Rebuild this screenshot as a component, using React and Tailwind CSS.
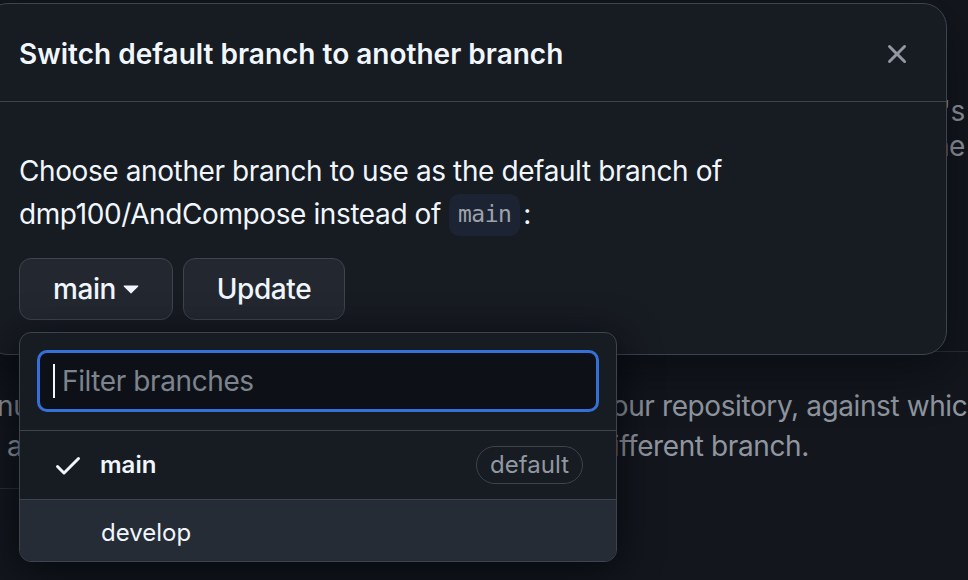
import React from "react";

const font = { fontFamily: "Inter, 'Noto Sans', sans-serif" };

function XIcon() {
  return (
    <svg width="32" height="32" viewBox="0 0 16 16" fill="#9198a1">
      <path d="M3.72 3.72a.75.75 0 0 1 1.06 0L8 6.94l3.22-3.22a.749.749 0 0 1 1.275.326.749.749 0 0 1-.215.734L9.06 8l3.22 3.22a.749.749 0 0 1-.326 1.275.749.749 0 0 1-.734-.215L8 9.06l-3.22 3.22a.751.751 0 0 1-1.042-.018.751.751 0 0 1-.018-1.042L6.94 8 3.72 4.78a.75.75 0 0 1 0-1.06Z" />
    </svg>
  );
}

function CheckIcon() {
  return (
    <svg width="32" height="32" viewBox="0 0 16 16" fill="#f0f6fc">
      <path d="M13.78 4.22a.75.75 0 0 1 0 1.06l-7.25 7.25a.75.75 0 0 1-1.06 0L2.22 9.28a.751.751 0 0 1 .018-1.042.751.751 0 0 1 1.042-.018L6 10.94l6.72-6.72a.75.75 0 0 1 1.06 0Z" />
    </svg>
  );
}

function Caret() {
  return (
    <svg width="16" height="9" viewBox="0 0 16 9" fill="#f0f6fc">
      <path d="M1.2 0.5h13.6a.6.6 0 0 1 .42 1.02L8.42 8.3a.6.6 0 0 1-.84 0L.78 1.52A.6.6 0 0 1 1.2.5Z" />
    </svg>
  );
}

export default function App() {
  return (
    <div
      className="relative w-[968px] h-[580px] overflow-hidden bg-[#13171d] text-[28px] tracking-[-0.4px]"
      style={font}
    >
      {/* page behind the dialog */}
      <div className="flex flex-col text-[#9096a0]">
        <div className="h-[94px]">
          <div className="-mt-[26px] -ml-[4px] leading-[32px] text-[#3a64ab]">tories</div>
        </div>
        <div className="flex flex-col items-end pr-[3px] leading-[35px]">
          <div>repository's</div>
          <div>the</div>
        </div>
        <div className="h-[188px] border-b border-[#2a2f37]" />
        <div className="pt-[34px] leading-[40px]">
          <div className="flex whitespace-nowrap">
            <span className="w-[600px] shrink-0 -ml-[3px]">nu</span>
            <span>your repository, against which</span>
          </div>
          <div className="flex whitespace-nowrap">
            <span className="w-[596px] shrink-0 pl-[7px]">a</span>
            <span>different branch.</span>
          </div>
        </div>
        <div className="h-[23px] w-[30px] border-b border-[#2a2f37]" />
      </div>

      {/* dialog */}
      <div className="absolute left-[-16px] top-[3px] w-[963px] h-[352px] rounded-[24px] border border-[#3d444d] bg-[#171b22] shadow-[0_16px_48px_rgba(1,4,9,0.5)] flex flex-col">
        <div className="h-[98px] shrink-0 flex items-center justify-between pl-[34px] pr-[33px] pt-[3px] border-b border-[#3d444d]">
          <div className="font-semibold text-[#f0f6fc] tracking-[0px]">
            Switch default branch to another branch
          </div>
          <XIcon />
        </div>
        <div className="pl-[34px] pt-[48px] flex flex-col">
          <div className="leading-[43px] text-[#f0f6fc]">
            <div>Choose another branch to use as the default branch of</div>
            <div className="flex items-center">
              <span>dmp100/AndCompose instead of</span>
              <code
                className="ml-[8px] mr-[3px] px-[9px] h-[42px] flex items-center rounded-[10px] bg-[#1c2433] text-[#9ca3ab] text-[23px] tracking-[-0.5px]"
                style={{ fontFamily: "'DejaVu Sans Mono', 'Liberation Mono', monospace" }}
              >
                main
              </code>
              <span>:</span>
            </div>
          </div>
          <div className="mt-[22px] flex gap-[10px]">
            <button className="h-[62px] w-[154px] rounded-[12px] border border-[#3d444d] bg-[#232830] text-[#f0f6fc] font-medium flex items-center justify-center gap-[7px]">
              <span>main</span>
              <Caret />
            </button>
            <button className="h-[62px] w-[162px] rounded-[12px] border border-[#3d444d] bg-[#232830] text-[#f0f6fc] font-medium flex items-center justify-center">
              Update
            </button>
          </div>
        </div>
      </div>

      {/* branch menu */}
      <div className="absolute left-[19px] top-[332px] w-[598px] h-[230px] rounded-[12px] border border-[#3d444d] bg-[#171b22] shadow-[0_8px_40px_rgba(1,4,9,0.75)] overflow-hidden flex flex-col">
        <div className="h-[98px] shrink-0 px-[17px] pt-[17px] border-b border-[#3d444d]">
          <div className="relative h-[62px] rounded-[10px] border-[3px] border-[#3570d9] bg-[#0d1117] flex items-center pl-[22px]">
            <div className="absolute left-[13px] top-[11px] w-[2px] h-[34px] bg-[#f0f6fc]" />
            <span className="text-[#7d848d]">Filter branches</span>
          </div>
        </div>
        <div className="h-[69px] shrink-0 flex items-center pl-[32px] pr-[33px] border-b border-[#3d444d]">
          <CheckIcon />
          <span className="ml-[16px] font-semibold text-[#f0f6fc] text-[24px] tracking-[0px]">main</span>
          <span className="ml-auto h-[38px] px-[13px] flex items-center rounded-full border border-[#3d444d] text-[#9198a1] text-[24px] tracking-[0px]">
            default
          </span>
        </div>
        <div className="flex-1 bg-[#262c36] flex items-center pl-[81px] pt-[4px] text-[#f0f6fc] text-[24px] tracking-[0px]">
          develop
        </div>
      </div>
    </div>
  );
}
